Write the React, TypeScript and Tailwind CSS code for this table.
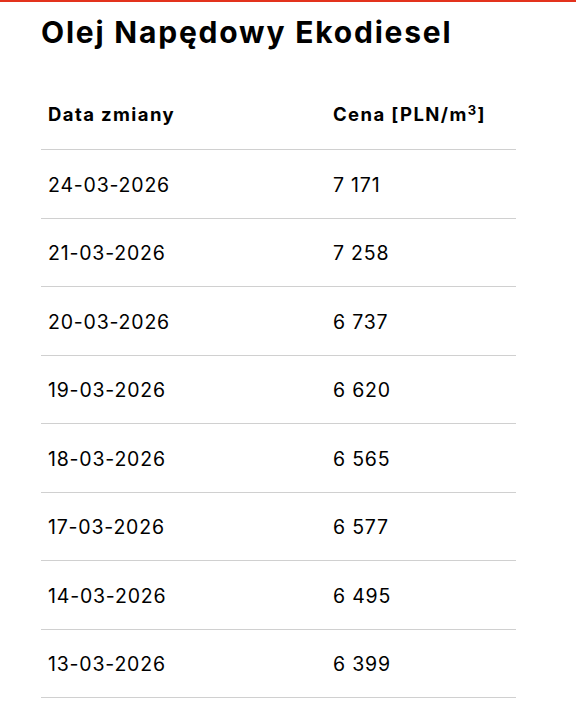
import React from "react";

const rows: [string, string][] = [
  ["24-03-2026", "7 171"],
  ["21-03-2026", "7 258"],
  ["20-03-2026", "6 737"],
  ["19-03-2026", "6 620"],
  ["18-03-2026", "6 565"],
  ["17-03-2026", "6 577"],
  ["14-03-2026", "6 495"],
  ["13-03-2026", "6 399"],
];

export default function App() {
  return (
    <div className="min-h-[714px] w-[576px] bg-white text-black" style={{ fontFamily: "Inter, sans-serif" }}>
      <div className="h-[2px] bg-[#e3321d]" />
      <div className="pl-[41px] pr-[60px]">
        <h1 className="mt-[10px] text-[30px] font-bold leading-[40px] tracking-[1.8px] text-black">Olej Napędowy Ekodiesel</h1>
        <table className="mt-[39px] w-full border-collapse">
          <thead>
            <tr className="border-b border-[#d0d0d0]">
              <th className="w-[60%] px-[7px] pb-[21px] pt-[10px] text-left text-[18.5px] font-bold leading-[27px] tracking-[1.4px]">Data zmiany</th>
              <th className="px-[7px] pb-[21px] pt-[10px] text-left text-[18.5px] font-bold leading-[27px] tracking-[1.4px]">
                Cena [PLN/m<sup className="text-[13px]">3</sup>]
              </th>
            </tr>
          </thead>
          <tbody>
            {rows.map(([d, p]) => (
              <tr key={d} className="border-b border-[#d0d0d0]">
                <td className="h-[68.5px] px-[7px] pt-[3px] text-[19.5px] leading-[27px] tracking-[0.8px]">{d}</td>
                <td className="h-[68.5px] px-[7px] pt-[3px] text-[19.5px] leading-[27px] tracking-[0.8px]">{p}</td>
              </tr>
            ))}
          </tbody>
        </table>
      </div>
    </div>
  );
}
